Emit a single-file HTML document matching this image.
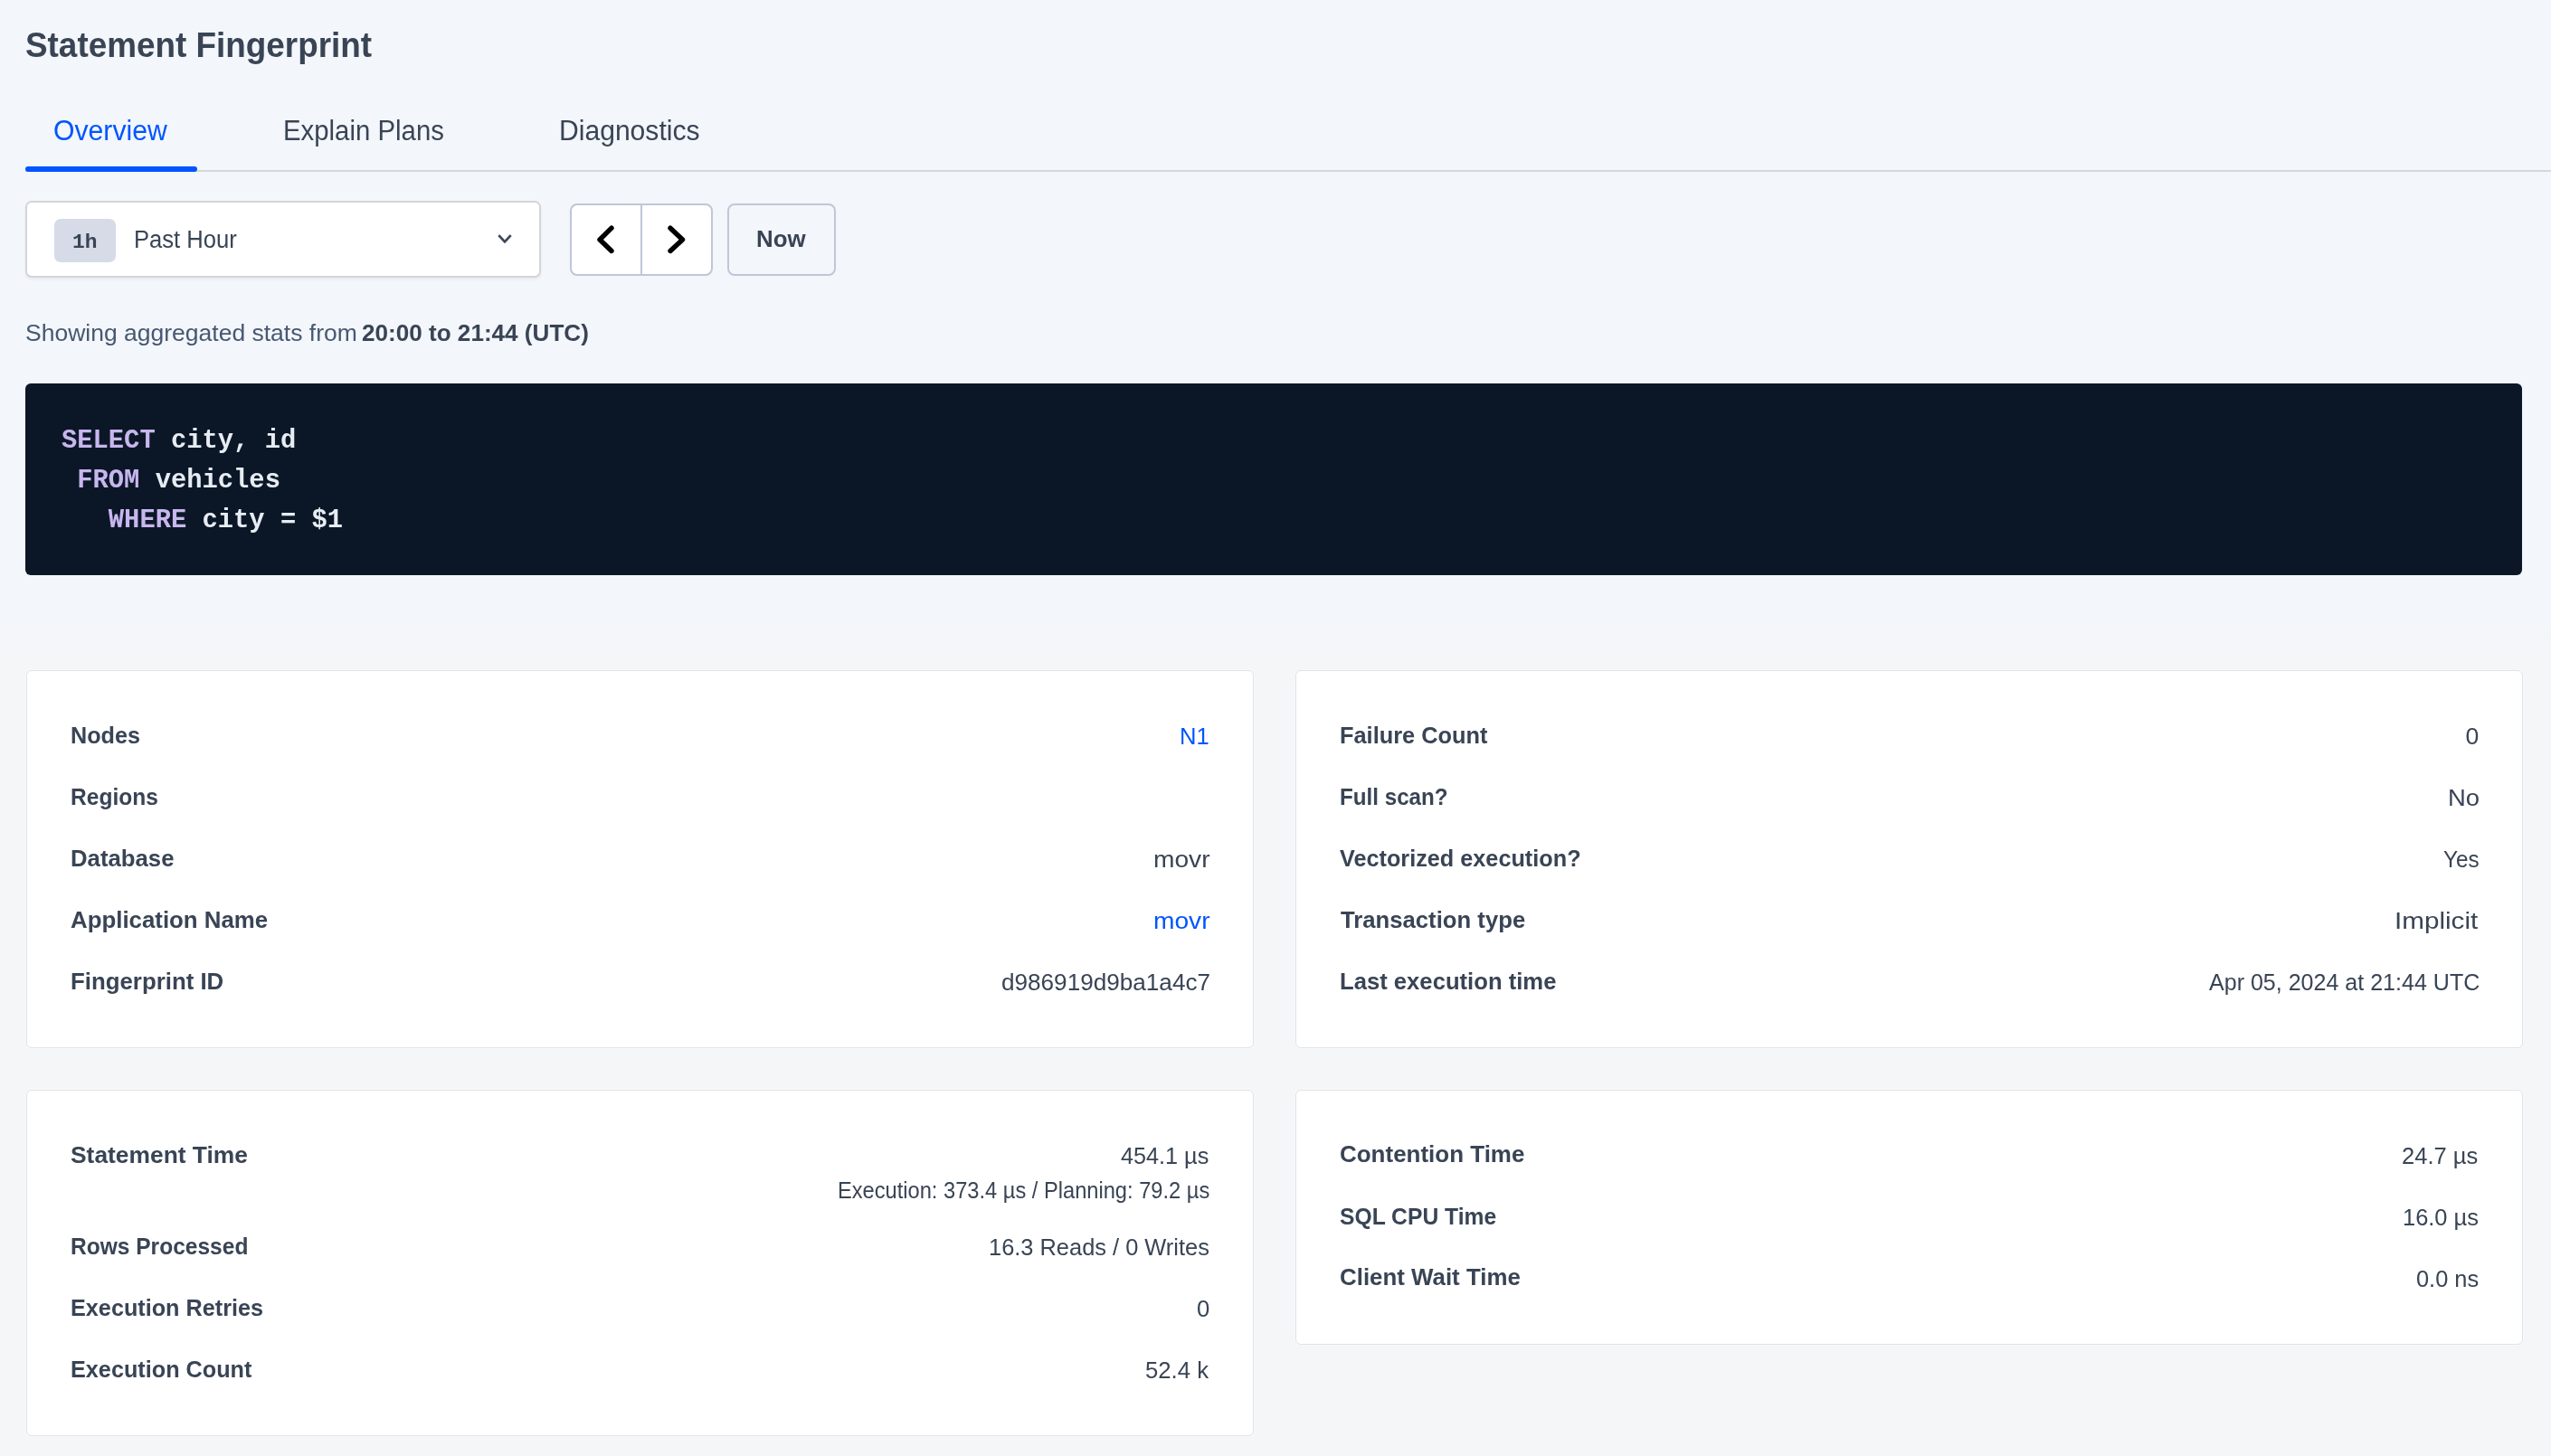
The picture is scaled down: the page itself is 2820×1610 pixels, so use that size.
<!DOCTYPE html>
<html lang="en">
<head>
<meta charset="utf-8">
<title>Statement Fingerprint</title>
<style>
html,body{margin:0;padding:0;}
body{width:2820px;height:1610px;background:#f3f6fa;font-family:"Liberation Sans",sans-serif;color:#394455;}
#page{will-change:transform;position:relative;width:2820px;height:1610px;overflow:hidden;}
.abs{position:absolute;box-sizing:border-box;}
.t{position:absolute;white-space:pre;display:block;margin:0;padding:0;font-weight:400;text-decoration:none;transform-origin:0 50%;}
header,nav,p,dl,.controls{display:block;margin:0;padding:0;}
.lower{left:0;top:690px;width:2820px;height:920px;background:linear-gradient(#f3f6fa 0,#f5f6f8 44px,#f5f6f8 100%);}
.tabline{left:28px;top:188px;width:2792px;height:2px;background:#d6d9dc;}
.ink{left:28px;top:184px;width:190px;height:6px;border-radius:3px;background:#0055ff;}
.select{left:28px;top:222px;width:570px;height:85px;background:#fff;border:2px solid #d3d5d8;border-radius:7px;box-shadow:0 2px 3px rgba(30,40,60,.06);}
.badge{left:60px;top:242px;width:68px;height:48px;border-radius:7px;background:#d6dbe7;}
.btngrp{left:630px;top:225px;width:158px;height:80px;background:#fff;border:2px solid #c0c6d9;border-radius:8px;}
.btndiv{left:708px;top:225px;width:2px;height:80px;background:#c0c6d9;}
.nowbtn{left:804px;top:225px;width:120px;height:80px;border:2px solid #c0c6d9;border-radius:8px;}
.code{left:28px;top:424px;width:2760px;height:212px;border-radius:6px;background:#0b1727;}
.code pre{margin:0;position:absolute;left:40px;top:42px;font-family:"Liberation Mono",monospace;font-weight:700;font-size:28.8px;line-height:44px;color:#e7ecf3;}
.code b{color:#c8b6ee;font-weight:700;}
.card{background:#fff;border:1px solid #e1e3e6;border-radius:6px;box-shadow:0 0 3px rgba(255,255,255,.6);}
</style>
</head>
<body>
<div id="page">
<div class="abs lower"></div>
<div class="abs tabline"></div>
<div class="abs ink"></div>
<div class="abs select"></div>
<div class="abs badge"></div>
<svg class="abs" style="left:548px;top:255px" width="20" height="18" viewBox="0 0 20 18"><path d="M3.3 5.1 L10 12.4 L16.7 5.1" fill="none" stroke="#3d4859" stroke-width="2.8" stroke-linecap="butt" stroke-linejoin="round"/></svg>
<div class="abs btngrp"></div>
<div class="abs btndiv"></div>
<svg class="abs" style="left:650px;top:245px" width="40" height="40" viewBox="0 0 40 40"><path d="M26 7.2 L13 20 L26 32.5" fill="none" stroke="#000" stroke-width="5.4" stroke-linecap="round" stroke-linejoin="round"/></svg>
<svg class="abs" style="left:727.5px;top:245px" width="40" height="40" viewBox="0 0 40 40"><path d="M13 7.2 L26.5 20 L13 32.5" fill="none" stroke="#000" stroke-width="5.4" stroke-linecap="round" stroke-linejoin="round"/></svg>
<div class="abs nowbtn"></div>
<div class="abs code"><pre><b>SELECT</b> city, id
 <b>FROM</b> vehicles
   <b>WHERE</b> city = $1</pre></div>
<div class="abs card" style="left:29px;top:741px;width:1357px;height:418px"></div>
<div class="abs card" style="left:1432px;top:741px;width:1357px;height:418px"></div>
<div class="abs card" style="left:29px;top:1205px;width:1357px;height:383px"></div>
<div class="abs card" style="left:1432px;top:1205px;width:1357px;height:282px"></div>

<header>
<h1 class="t" style='left:27.9px;top:23.9px;font-size:39px;line-height:51px;color:#394455;font-weight:700;transform:scaleX(0.9454);'>Statement Fingerprint</h1>
</header>
<nav>
<a class="t" style='left:59.3px;top:124.9px;font-size:30.8px;line-height:40px;color:#0055ff;transform:scaleX(0.9797);'>Overview</a>
<a class="t" style='left:313.2px;top:124.9px;font-size:30.8px;line-height:40px;color:#394455;transform:scaleX(0.9533);'>Explain Plans</a>
<a class="t" style='left:618.0px;top:124.9px;font-size:30.8px;line-height:40px;color:#394455;transform:scaleX(0.9771);'>Diagnostics</a>
</nav>
<div class="controls">
<span class="t" style='left:80.2px;top:254.3px;font-size:21.6px;line-height:28px;color:#394455;font-weight:700;font-family:"Liberation Mono", monospace;transform:scaleX(1.0595);'>1h</span>
<span class="t" style='left:148.0px;top:248.0px;font-size:26.8px;line-height:35px;color:#394455;transform:scaleX(0.9549);'>Past Hour</span>
<span class="t" style='left:835.7px;top:247.3px;font-size:26.6px;line-height:35px;color:#394455;font-weight:700;transform:scaleX(0.9734);'>Now</span>
</div>
<p>
<span class="t" style='left:27.5px;top:351.3px;font-size:26.6px;line-height:35px;color:#475872;transform:scaleX(0.9966);'>Showing aggregated stats from</span>
<b class="t" style='left:399.9px;top:351.1px;font-size:26.6px;line-height:35px;color:#394455;font-weight:700;transform:scaleX(0.9812);'>20:00 to 21:44 (UTC)</b>
</p>
<dl>
<dt class="t" style='left:78.1px;top:796.3px;font-size:26.6px;line-height:35px;color:#394455;font-weight:700;transform:scaleX(0.9477);'>Nodes</dt>
<dt class="t" style='left:78.1px;top:864.3px;font-size:26.6px;line-height:35px;color:#394455;font-weight:700;transform:scaleX(0.9231);'>Regions</dt>
<dt class="t" style='left:78.1px;top:932.3px;font-size:26.6px;line-height:35px;color:#394455;font-weight:700;transform:scaleX(0.9681);'>Database</dt>
<dt class="t" style='left:77.8px;top:1000.3px;font-size:26.6px;line-height:35px;color:#394455;font-weight:700;transform:scaleX(0.9712);'>Application Name</dt>
<dt class="t" style='left:78.1px;top:1068.3px;font-size:26.6px;line-height:35px;color:#394455;font-weight:700;transform:scaleX(0.9709);'>Fingerprint ID</dt>
<dd class="t" style='left:1304.2px;top:797.1px;font-size:26.6px;line-height:35px;color:#0055ff;transform:scaleX(0.9619);'>N1</dd>
<dd class="t" style='left:1274.6px;top:933.3px;font-size:26.6px;line-height:35px;color:#394455;transform:scaleX(1.0582);'>movr</dd>
<dd class="t" style='left:1274.6px;top:1001.3px;font-size:26.6px;line-height:35px;color:#0055ff;transform:scaleX(1.0582);'>movr</dd>
<dd class="t" style='left:1106.9px;top:1069.3px;font-size:26.6px;line-height:35px;color:#394455;transform:scaleX(0.9824);'>d986919d9ba1a4c7</dd>
</dl>
<dl>
<dt class="t" style='left:1480.9px;top:796.3px;font-size:26.6px;line-height:35px;color:#394455;font-weight:700;transform:scaleX(0.9540);'>Failure Count</dt>
<dt class="t" style='left:1480.9px;top:864.3px;font-size:26.6px;line-height:35px;color:#394455;font-weight:700;transform:scaleX(0.9090);'>Full scan?</dt>
<dt class="t" style='left:1481.0px;top:932.3px;font-size:26.6px;line-height:35px;color:#394455;font-weight:700;transform:scaleX(0.9493);'>Vectorized execution?</dt>
<dt class="t" style='left:1482.1px;top:1000.3px;font-size:26.6px;line-height:35px;color:#394455;font-weight:700;transform:scaleX(0.9661);'>Transaction type</dt>
<dt class="t" style='left:1480.9px;top:1068.3px;font-size:26.6px;line-height:35px;color:#394455;font-weight:700;transform:scaleX(0.9642);'>Last execution time</dt>
<dd class="t" style='left:2725.6px;top:797.3px;font-size:26.6px;line-height:35px;color:#394455;transform:scaleX(1.0000);'>0</dd>
<dd class="t" style='left:2705.6px;top:865.3px;font-size:26.6px;line-height:35px;color:#394455;transform:scaleX(1.0327);'>No</dd>
<dd class="t" style='left:2700.9px;top:933.3px;font-size:26.6px;line-height:35px;color:#394455;transform:scaleX(0.9110);'>Yes</dd>
<dd class="t" style='left:2647.4px;top:1001.3px;font-size:26.6px;line-height:35px;color:#394455;transform:scaleX(1.1143);'>Implicit</dd>
<dd class="t" style='left:2441.6px;top:1069.3px;font-size:26.6px;line-height:35px;color:#394455;transform:scaleX(0.9416);'>Apr 05, 2024 at 21:44 UTC</dd>
</dl>
<dl>
<dt class="t" style='left:78.3px;top:1259.9px;font-size:26.6px;line-height:35px;color:#394455;font-weight:700;transform:scaleX(0.9919);'>Statement Time</dt>
<dt class="t" style='left:77.9px;top:1360.7px;font-size:26.6px;line-height:35px;color:#394455;font-weight:700;transform:scaleX(0.9226);'>Rows Processed</dt>
<dt class="t" style='left:77.9px;top:1428.6px;font-size:26.6px;line-height:35px;color:#394455;font-weight:700;transform:scaleX(0.9484);'>Execution Retries</dt>
<dt class="t" style='left:77.9px;top:1496.6px;font-size:26.6px;line-height:35px;color:#394455;font-weight:700;transform:scaleX(0.9485);'>Execution Count</dt>
<dd class="t" style='left:1239.4px;top:1261.3px;font-size:26.6px;line-height:35px;color:#394455;transform:scaleX(0.9484);'>454.1 µs</dd>
<dd class="t" style='left:925.7px;top:1299.5px;font-size:25px;line-height:32px;color:#394455;transform:scaleX(0.9461);'>Execution: 373.4 µs / Planning: 79.2 µs</dd>
<dd class="t" style='left:1093.0px;top:1362.3px;font-size:26.6px;line-height:35px;color:#394455;transform:scaleX(0.9555);'>16.3 Reads / 0 Writes</dd>
<dd class="t" style='left:1322.7px;top:1430.3px;font-size:26.6px;line-height:35px;color:#394455;transform:scaleX(0.9651);'>0</dd>
<dd class="t" style='left:1266.2px;top:1498.3px;font-size:26.6px;line-height:35px;color:#394455;transform:scaleX(0.9665);'>52.4 k</dd>
</dl>
<dl>
<dt class="t" style='left:1481.2px;top:1259.3px;font-size:26.6px;line-height:35px;color:#394455;font-weight:700;transform:scaleX(0.9766);'>Contention Time</dt>
<dt class="t" style='left:1481.3px;top:1327.9px;font-size:26.6px;line-height:35px;color:#394455;font-weight:700;transform:scaleX(0.9275);'>SQL CPU Time</dt>
<dt class="t" style='left:1481.2px;top:1394.9px;font-size:26.6px;line-height:35px;color:#394455;font-weight:700;transform:scaleX(0.9730);'>Client Wait Time</dt>
<dd class="t" style='left:2655.3px;top:1261.3px;font-size:26.6px;line-height:35px;color:#394455;transform:scaleX(0.9599);'>24.7 µs</dd>
<dd class="t" style='left:2656.0px;top:1329.3px;font-size:26.6px;line-height:35px;color:#394455;transform:scaleX(0.9560);'>16.0 µs</dd>
<dd class="t" style='left:2670.7px;top:1396.9px;font-size:26.6px;line-height:35px;color:#394455;transform:scaleX(0.9540);'>0.0 ns</dd>
</dl>
</div>
</body>
</html>
